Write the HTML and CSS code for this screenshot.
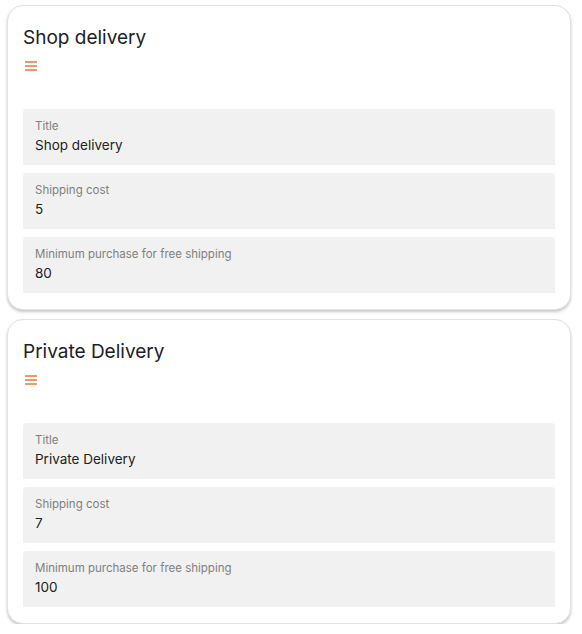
FILE: index.html
```html
<!DOCTYPE html>
<html lang="en">
<head>
  <meta charset="UTF-8" />
  <meta name="viewport" content="width=device-width, initial-scale=1.0"/>
  <title>Delivery options</title>
  <link rel="stylesheet" href="styles.css">
</head>
<body>

  <div class="delivery-list">

    <div class="card">
      <h2 class="card-title">Shop delivery</h2>
      <div class="drag-handle">
        <svg width="12" height="10" viewBox="0 0 12 10"><path d="M0 1h12M0 5h12M0 9h12" stroke="#f4713c" stroke-width="1.6"/></svg>
      </div>
      <div class="fields">
        <div class="field">
          <span class="field-label">Title</span>
          <span class="field-value">Shop delivery</span>
        </div>
        <div class="field">
          <span class="field-label">Shipping cost</span>
          <span class="field-value">5</span>
        </div>
        <div class="field">
          <span class="field-label">Minimum purchase for free shipping</span>
          <span class="field-value">80</span>
        </div>
      </div>
    </div>

    <div class="card">
      <h2 class="card-title">Private Delivery</h2>
      <div class="drag-handle">
        <svg width="12" height="10" viewBox="0 0 12 10"><path d="M0 1h12M0 5h12M0 9h12" stroke="#f4713c" stroke-width="1.6"/></svg>
      </div>
      <div class="fields">
        <div class="field">
          <span class="field-label">Title</span>
          <span class="field-value">Private Delivery</span>
        </div>
        <div class="field">
          <span class="field-label">Shipping cost</span>
          <span class="field-value">7</span>
        </div>
        <div class="field">
          <span class="field-label">Minimum purchase for free shipping</span>
          <span class="field-value">100</span>
        </div>
      </div>
    </div>

  </div>

</body>
</html>
```

FILE: styles.css
```css
body {
  margin: 0;
  font-family: 'Inter', 'Noto Sans', sans-serif;
  background-color: #fff;
  color: #1f2328;
}

.delivery-list {
  display: flex;
  flex-direction: column;
  gap: 9px;
  padding: 5px 11px 0 7px;
}

.card {
  background: #fff;
  border: 1px solid #e2e2e2;
  border-radius: 16px;
  box-shadow: 0 2px 3px rgba(0, 0, 0, 0.22);
  padding: 18px 15px 16px 15px;
}

.card-title {
  margin: 0;
  font-size: 19px;
  font-weight: 400;
  line-height: 28px;
  color: #1c2126;
}

.drag-handle {
  display: flex;
  padding-left: 2px;
  margin-top: 9px;
}

.drag-handle svg {
  display: block;
}

.fields {
  display: flex;
  flex-direction: column;
  gap: 8px;
  margin-top: 38px;
}

.field {
  display: flex;
  flex-direction: column;
  height: 56px;
  box-sizing: border-box;
  padding: 9px 12px 0 12px;
  background: #f1f1f1;
  border-radius: 4px 4px 0 0;
}

.field-label {
  font-size: 11.5px;
  line-height: 16px;
  color: #808080;
}

.field-value {
  margin-top: 1px;
  font-size: 13.5px;
  line-height: 20px;
  color: #222;
}
```
